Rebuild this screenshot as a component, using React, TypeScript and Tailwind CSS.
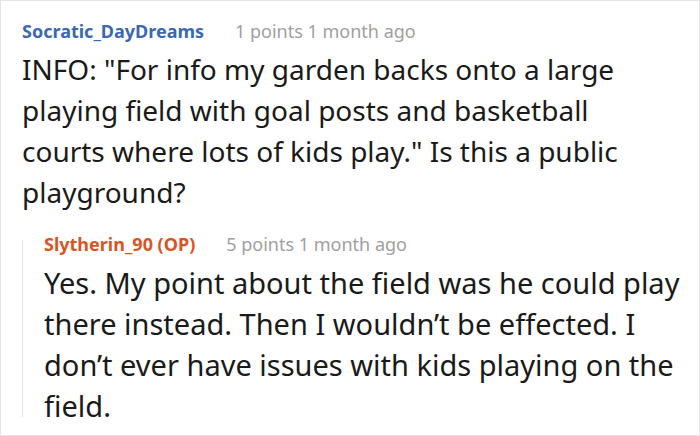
import React from 'react';

interface HeaderProps {
  author: string;
  authorClass: string;
  meta: string;
}

function CommentHeader({ author, authorClass, meta }: HeaderProps) {
  return (
    <div className="flex items-center h-[24px] text-[18px] leading-[24px] whitespace-nowrap">
      <span className={`font-bold ${authorClass}`}>{author}</span>
      <span className="ml-[31px] text-[#a0a0a0]">{meta}</span>
    </div>
  );
}

export default function App() {
  return (
    <div
      className="w-[700px] h-[436px] bg-white border border-[#e4e4e4] pl-[21px] pt-[18px] overflow-hidden text-[#1a1a1a]"
      style={{ fontFamily: '"Noto Sans", "Open Sans", sans-serif' }}
    >
      <CommentHeader
        author="Socratic_DayDreams"
        authorClass="text-[#3a68b2]"
        meta="1 points 1 month ago"
      />
      <p className="mt-[6px] text-[28px] leading-[41px] pr-[30px]">
        INFO: "For info my garden backs onto a large playing field with goal posts and basketball
        courts where lots of kids play." Is this a public playground?
      </p>

      {/* reply */}
      <div className="mt-[19px] flex">
        <div className="w-px bg-[#e6e6e6] mt-[8px] mb-[9px] shrink-0" />
        <div className="pl-[21px] pr-[7px] flex-1">
          <CommentHeader
            author="Slytherin_90 (OP)"
            authorClass="text-[#d9541f]"
            meta="5 points 1 month ago"
          />
          <p className="mt-[6px] text-[29px] leading-[41px]">
            Yes. My point about the field was he could play there instead. Then I wouldn’t be
            effected. I don’t ever have issues with kids playing on the field.
          </p>
        </div>
      </div>
    </div>
  );
}
